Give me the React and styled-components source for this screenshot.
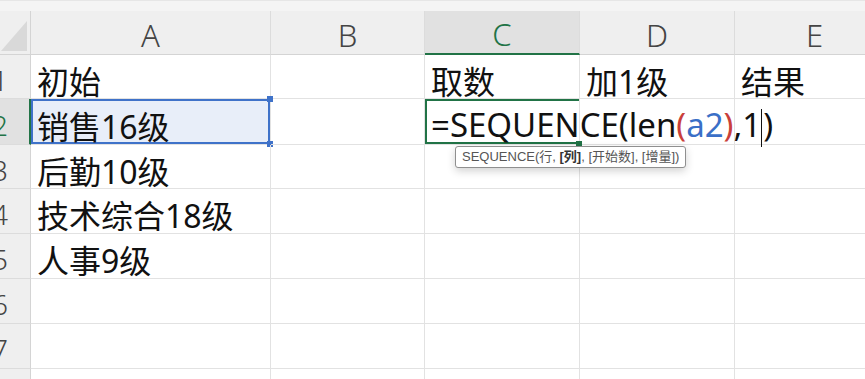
import React from "react";
import styled, { createGlobalStyle, css } from "styled-components";

const GlobalStyle = createGlobalStyle`
  html, body {
    margin: 0;
    padding: 0;
    background: #ffffff;
    overflow: hidden;
  }
  body {
    font-family: "Noto Sans", "Noto Sans CJK SC", sans-serif;
  }
`;

const COLS = [
  { key: "A", width: 240 },
  { key: "B", width: 154 },
  { key: "C", width: 155 },
  { key: "D", width: 155 },
  { key: "E", width: 160 },
];

const ROW_HEIGHTS = [44, 46, 44, 45, 45, 45, 45, 45];

const rows = [
  ["初始", "", "取数", "加1级", "结果"],
  ["销售16级", "", "", "", ""],
  ["后勤10级", "", "", "", ""],
  ["技术综合18级", "", "", "", ""],
  ["人事9级", "", "", "", ""],
  ["", "", "", "", ""],
  ["", "", "", "", ""],
  ["", "", "", "", ""],
];

const Page = styled.div`
  width: 865px;
  height: 379px;
  overflow: hidden;
  background: #ffffff;
  display: flex;
  flex-direction: column;
`;

const TopStrip = styled.div`
  height: 11px;
  flex: none;
  background: #f4f4f4;
  border-top: 1px solid #e6e6e6;
  box-sizing: border-box;
`;

const Row = styled.div`
  display: flex;
  flex: none;
  height: ${(p) => p.$h}px;
`;

const Corner = styled.div`
  width: 31px;
  flex: none;
  background: #efefef;
  border-right: 1px solid #d4d4d4;
  border-bottom: 1px solid #d4d4d4;
  box-sizing: border-box;
  display: flex;
  align-items: flex-end;
  justify-content: flex-end;
  padding: 0 3px 3px 0;
`;

const ColHead = styled.div`
  width: ${(p) => p.$w}px;
  flex: none;
  box-sizing: border-box;
  background: ${(p) => (p.$active ? "#e1e1e1" : "#efefef")};
  border-right: 1px solid #dcdcdc;
  border-bottom: ${(p) => (p.$active ? "2px solid #217346" : "1px solid #d4d4d4")};
  color: ${(p) => (p.$active ? "#217346" : "#444444")};
  font-size: 31px;
  font-family: "Noto Sans", sans-serif;
  font-weight: 300;
  display: flex;
  align-items: center;
  justify-content: center;
  padding-top: 4px;
`;

const RowHead = styled.div`
  width: 31px;
  flex: none;
  box-sizing: border-box;
  overflow: hidden;
  background: ${(p) => (p.$active ? "#e1e1e1" : "#efefef")};
  border-right: ${(p) => (p.$active ? "2px solid #217346" : "1px solid #d4d4d4")};
  border-bottom: 1px solid #dcdcdc;
  color: ${(p) => (p.$active ? "#217346" : "#444444")};
  font-size: 28px;
  font-family: "Noto Sans", sans-serif;
  font-weight: 300;
  display: flex;
  align-items: center;
  padding-top: 6px;
`;

const RowNum = styled.span`
  margin-left: -8px;
`;

const Cell = styled.div`
  position: relative;
  width: ${(p) => p.$w}px;
  flex: none;
  box-sizing: border-box;
  border-right: 1px solid #e2e2e2;
  border-bottom: 1px solid #e2e2e2;
  font-family: "Noto Sans", "Noto Sans CJK SC", sans-serif;
  font-size: 32px;
  color: #111111;
  white-space: nowrap;
  display: flex;
  align-items: center;
  padding: 6px 0 0 6px;
  ${(p) =>
    p.$selected &&
    css`
      background: #e8eef9;
      box-shadow: inset 0 0 0 2px #3f72c9;
    `}
  ${(p) =>
    p.$active &&
    css`
      z-index: 2;
      overflow: visible;
      box-shadow: inset 2px 2px 0 #217346, inset 0 -2px 0 #217346;
    `}
`;

const Handle = styled.span`
  position: absolute;
  right: -3px;
  width: 6px;
  height: 6px;
  background: ${(p) => p.$color};
  ${(p) => (p.$bottom ? "bottom: -3px;" : "top: -3px;")}
`;

const Formula = styled.span`
  position: relative;
  z-index: 3;
  font-size: 33px;
`;

const Paren = styled.span`
  color: #c9403a;
`;

const Ref = styled.span`
  color: #3a6fc7;
`;

const Caret = styled.span`
  display: inline-block;
  width: 1px;
  height: 38px;
  background: #111111;
  vertical-align: middle;
  margin: 0 1px 0 0;
`;

const Tooltip = styled.div`
  position: absolute;
  left: 30px;
  top: 47px;
  z-index: 4;
  background: #ffffff;
  border: 1px solid #8f8f8f;
  border-radius: 3px;
  box-shadow: 0 3px 8px rgba(0, 0, 0, 0.18);
  padding: 2px 6px 3px 6px;
  font-family: "Liberation Sans", "Noto Sans CJK SC", sans-serif;
  font-size: 13px;
  color: #555555;
  white-space: nowrap;
  line-height: 15px;
`;

const Bold = styled.b`
  color: #333333;
`;

function CornerTriangle() {
  return (
    <svg width="26" height="30" viewBox="0 0 26 30">
      <polygon points="0,30 26,30 26,0" fill="#d9d9d9" />
    </svg>
  );
}

function FormulaEditor() {
  return (
    <>
      <Formula>
        =SEQUENCE(len<Paren>(</Paren>
        <Ref>a2</Ref>
        <Paren>)</Paren>,1<Caret />)
      </Formula>
      <Handle $color="#217346" $bottom />
      <Tooltip>
        SEQUENCE(行, <Bold>[列]</Bold>, [开始数], [增量])
      </Tooltip>
    </>
  );
}

export default function App() {
  return (
    <Page>
      <GlobalStyle />
      <TopStrip />
      <Row $h={44}>
        <Corner>
          <CornerTriangle />
        </Corner>
        {COLS.map((c) => (
          <ColHead key={c.key} $w={c.width} $active={c.key === "C"}>
            {c.key}
          </ColHead>
        ))}
      </Row>
      {rows.map((cells, r) => (
        <Row key={r} $h={ROW_HEIGHTS[r]}>
          <RowHead $active={r === 1}>
            <RowNum>{r + 1}</RowNum>
          </RowHead>
          {cells.map((text, c) => {
            const selected = r === 1 && c === 0;
            const active = r === 1 && c === 2;
            return (
              <Cell
                key={c}
                $w={COLS[c].width}
                $selected={selected}
                $active={active}
              >
                {active ? <FormulaEditor /> : text}
                {selected && (
                  <>
                    <Handle $color="#3f72c9" />
                    <Handle $color="#3f72c9" $bottom />
                  </>
                )}
              </Cell>
            );
          })}
        </Row>
      ))}
    </Page>
  );
}
